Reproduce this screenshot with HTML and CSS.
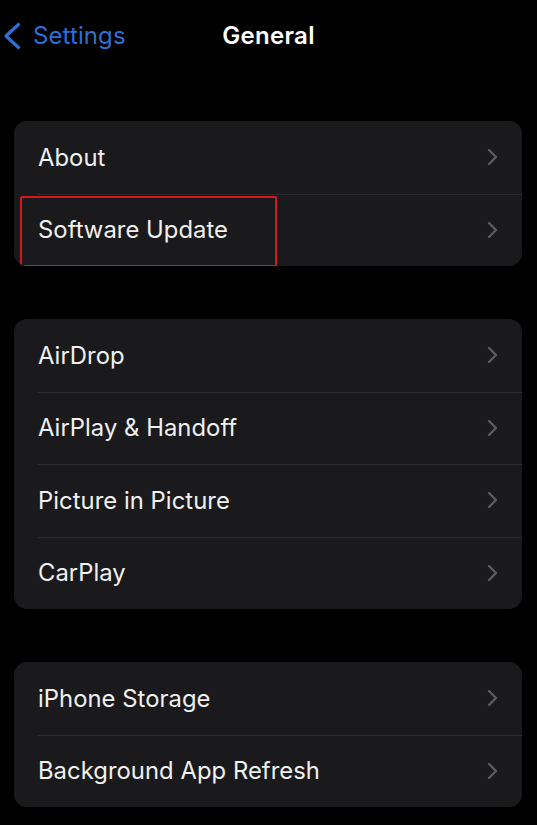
FILE: index.html
```html
<!DOCTYPE html>
<html>
<head>
<meta charset="utf-8">
<link rel="stylesheet" href="styles.css">
</head>
<body>
<div class="screen">
  <header class="nav">
    <div class="back">
      <svg class="back-icon" width="18" height="28" viewBox="0 0 18 28"><path d="M15.5 2.5 L3 14 L15.5 25.5" fill="none" stroke="#2f6fd8" stroke-width="3.2" stroke-linecap="round" stroke-linejoin="round"/></svg>
      <span class="back-label">Settings</span>
    </div>
    <div class="title">General</div>
  </header>

  <section class="group first">
    <div class="row"><span class="label">About</span><svg class="chev" width="12" height="18" viewBox="0 0 12 18"><path d="M3 2 L10 9 L3 16" fill="none" stroke="#5b5b60" stroke-width="2.4" stroke-linecap="round" stroke-linejoin="round"/></svg></div>
    <div class="row highlighted"><span class="label">Software Update</span><svg class="chev" width="12" height="18" viewBox="0 0 12 18"><path d="M3 2 L10 9 L3 16" fill="none" stroke="#5b5b60" stroke-width="2.4" stroke-linecap="round" stroke-linejoin="round"/></svg><div class="redbox"></div></div>
  </section>

  <section class="group">
    <div class="row"><span class="label">AirDrop</span><svg class="chev" width="12" height="18" viewBox="0 0 12 18"><path d="M3 2 L10 9 L3 16" fill="none" stroke="#5b5b60" stroke-width="2.4" stroke-linecap="round" stroke-linejoin="round"/></svg></div>
    <div class="row"><span class="label">AirPlay &amp; Handoff</span><svg class="chev" width="12" height="18" viewBox="0 0 12 18"><path d="M3 2 L10 9 L3 16" fill="none" stroke="#5b5b60" stroke-width="2.4" stroke-linecap="round" stroke-linejoin="round"/></svg></div>
    <div class="row"><span class="label">Picture in Picture</span><svg class="chev" width="12" height="18" viewBox="0 0 12 18"><path d="M3 2 L10 9 L3 16" fill="none" stroke="#5b5b60" stroke-width="2.4" stroke-linecap="round" stroke-linejoin="round"/></svg></div>
    <div class="row"><span class="label">CarPlay</span><svg class="chev" width="12" height="18" viewBox="0 0 12 18"><path d="M3 2 L10 9 L3 16" fill="none" stroke="#5b5b60" stroke-width="2.4" stroke-linecap="round" stroke-linejoin="round"/></svg></div>
  </section>

  <section class="group">
    <div class="row"><span class="label">iPhone Storage</span><svg class="chev" width="12" height="18" viewBox="0 0 12 18"><path d="M3 2 L10 9 L3 16" fill="none" stroke="#5b5b60" stroke-width="2.4" stroke-linecap="round" stroke-linejoin="round"/></svg></div>
    <div class="row"><span class="label">Background App Refresh</span><svg class="chev" width="12" height="18" viewBox="0 0 12 18"><path d="M3 2 L10 9 L3 16" fill="none" stroke="#5b5b60" stroke-width="2.4" stroke-linecap="round" stroke-linejoin="round"/></svg></div>
  </section>
</div>
</body>
</html>
```

FILE: styles.css
```css
html, body {
  margin: 0;
  padding: 0;
  background: #000;
}
body {
  font-family: Inter, "Liberation Sans", sans-serif;
  color: #f2f2f2;
}
.screen {
  width: 537px;
  height: 825px;
  overflow: hidden;
  background: #000;
}
.nav {
  position: relative;
  height: 72px;
  display: flex;
  align-items: center;
}
.back {
  display: flex;
  align-items: center;
  padding-left: 3px;
  gap: 12px;
  margin-top: -1px;
}
.back-icon {
  display: block;
}
.back-label {
  font-size: 24px;
  color: #2f6fd8;
  letter-spacing: 0.1px;
}
.title {
  position: absolute;
  left: 0;
  right: 0;
  top: 21px;
  text-align: center;
  font-size: 24px;
  font-weight: 600;
  color: #fff;
  padding-left: 0;
  line-height: 29px;
  letter-spacing: 0.3px;
}
.group {
  margin: 0 15px 53px 14px;
  background: #1a1a1c;
  border-radius: 13px;
  overflow: hidden;
}
.group.first {
  margin-top: 49px;
}
.row {
  position: relative;
  height: 72.5px;
  display: flex;
  align-items: center;
  justify-content: space-between;
  padding-left: 24px;
  padding-right: 24px;
  box-sizing: border-box;
}
.row + .row::before {
  content: "";
  position: absolute;
  top: 0;
  left: 24px;
  right: 0;
  height: 1px;
  background: #2a2a2d;
}
.label {
  font-size: 23.8px;
  color: #f0f0f0;
  letter-spacing: 0.05px;
}
.chev {
  display: block;
}
.redbox {
  position: absolute;
  left: 6px;
  top: 2px;
  width: 257px;
  height: 71px;
  border: 2px solid #d81620;
  box-sizing: border-box;
  border-radius: 2px;
}
```
